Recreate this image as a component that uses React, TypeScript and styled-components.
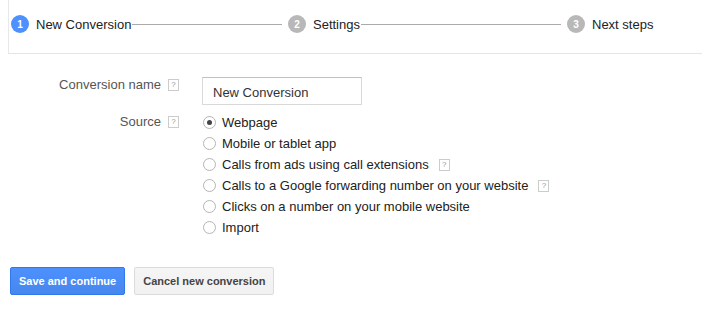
import React from "react";
import styled, { createGlobalStyle } from "styled-components";

const GlobalStyle = createGlobalStyle`
  html, body {
    margin: 0;
    padding: 0;
    background: #fff;
    font-family: "Liberation Sans", Arial, sans-serif;
  }
`;

const Page = styled.div`
  width: 702px;
  height: 314px;
  padding-left: 8px;
  box-sizing: border-box;
  overflow: hidden;
`;

const StepBar = styled.div`
  height: 54px;
  box-sizing: border-box;
  border-left: 1px solid #e8e8e8;
  border-bottom: 1px solid #e5e5e5;
  padding: 15px 0 0 2px;
  display: grid;
  grid-template-columns: 277px 279px auto;
  align-items: start;
`;

const Step = styled.div`
  display: flex;
  align-items: center;
  height: 18px;
`;

const StepNumber = styled.span<{ $active?: boolean }>`
  width: 18px;
  height: 18px;
  border-radius: 50%;
  background: ${(p) => (p.$active ? "#4d90fe" : "#b8b8b8")};
  color: #fff;
  font-size: 10px;
  font-weight: bold;
  display: flex;
  align-items: center;
  justify-content: center;
  flex-shrink: 0;
`;

const StepLabel = styled.span`
  margin-left: 7px;
  font-size: 13px;
  color: #222;
  white-space: nowrap;
`;

const StepLine = styled.span`
  flex: 1;
  height: 1px;
  background: #aaa;
  margin: 1px 6px 0 1px;
`;

const Form = styled.div`
  margin-top: 23px;
  display: flex;
  flex-direction: column;
  gap: 7px;
`;

const FormRow = styled.div`
  display: grid;
  grid-template-columns: 171px 1fr;
  column-gap: 23px;
  align-items: start;
`;

const FieldLabel = styled.div<{ $pad: number }>`
  display: flex;
  justify-content: flex-end;
  align-items: center;
  gap: 7px;
  font-size: 13px;
  line-height: 16px;
  color: #555;
  padding-top: ${(p) => p.$pad}px;
`;

const Help = styled.span`
  width: 9px;
  height: 10px;
  border: 1px solid #ccc;
  color: #999;
  font-size: 8px;
  line-height: 10px;
  text-align: center;
  display: inline-block;
  flex-shrink: 0;
`;

const TextInput = styled.input`
  width: 160px;
  height: 28px;
  box-sizing: border-box;
  border: 1px solid #d9d9d9;
  border-top-color: #c0c0c0;
  padding: 2px 0 0 10px;
  font-family: inherit;
  font-size: 13px;
  color: #333;
  outline: none;
`;

const RadioList = styled.div`
  display: flex;
  flex-direction: column;
  padding-left: 1px;
`;

const RadioRow = styled.label`
  display: flex;
  align-items: center;
  height: 21px;
  font-size: 13px;
  color: #222;
  gap: 6px;
`;

const RadioDot = styled.span<{ $checked?: boolean }>`
  width: 13px;
  height: 13px;
  box-sizing: border-box;
  border-radius: 50%;
  border: 1px solid #b5b5b5;
  background: #fff;
  display: flex;
  align-items: center;
  justify-content: center;
  flex-shrink: 0;

  &::after {
    content: "";
    width: 5px;
    height: 5px;
    border-radius: 50%;
    background: ${(p) => (p.$checked ? "#444" : "transparent")};
  }
`;

const RadioHelp = styled(Help)`
  margin-left: 4px;
`;

const Actions = styled.div`
  margin-top: 29px;
  padding-left: 2px;
  display: flex;
  gap: 9px;
`;

const Button = styled.button<{ $primary?: boolean }>`
  height: 28px;
  padding: 0 8px;
  border-radius: 2px;
  font-family: inherit;
  font-size: 11px;
  font-weight: bold;
  cursor: pointer;
  border: 1px solid ${(p) => (p.$primary ? "#3079ed" : "#dcdcdc")};
  background: ${(p) =>
    p.$primary
      ? "linear-gradient(#4d90fe, #4787ed)"
      : "linear-gradient(#f5f5f5, #f1f1f1)"};
  color: ${(p) => (p.$primary ? "#fff" : "#444")};
`;

const steps = ["New Conversion", "Settings", "Next steps"];

const sources = [
  { label: "Webpage", checked: true },
  { label: "Mobile or tablet app" },
  { label: "Calls from ads using call extensions", help: true },
  { label: "Calls to a Google forwarding number on your website", help: true },
  { label: "Clicks on a number on your mobile website" },
  { label: "Import" },
];

export default function App() {
  return (
    <Page>
      <GlobalStyle />
      <StepBar>
        {steps.map((s, i) => (
          <Step key={s}>
            <StepNumber $active={i === 0}>{i + 1}</StepNumber>
            <StepLabel>{s}</StepLabel>
            {i < steps.length - 1 && <StepLine />}
          </Step>
        ))}
      </StepBar>

      <Form>
        <FormRow>
          <FieldLabel $pad={0}>
            Conversion name <Help>?</Help>
          </FieldLabel>
          <TextInput defaultValue="New Conversion" />
        </FormRow>
        <FormRow>
          <FieldLabel $pad={2}>
            Source <Help>?</Help>
          </FieldLabel>
          <RadioList>
            {sources.map((src) => (
              <RadioRow key={src.label}>
                <RadioDot $checked={src.checked} />
                {src.label}
                {src.help && <RadioHelp>?</RadioHelp>}
              </RadioRow>
            ))}
          </RadioList>
        </FormRow>
      </Form>

      <Actions>
        <Button $primary>Save and continue</Button>
        <Button>Cancel new conversion</Button>
      </Actions>
    </Page>
  );
}
